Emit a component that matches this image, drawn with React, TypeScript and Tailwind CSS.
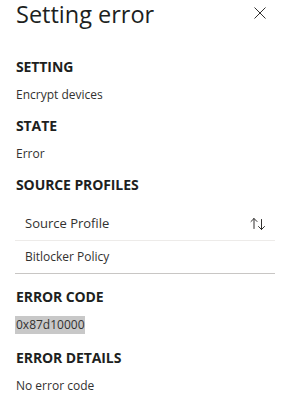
import React from "react";

const font = { fontFamily: '"Open Sans", "Noto Sans", sans-serif' };

function Heading({ children, className = "" }: { children: React.ReactNode; className?: string }) {
  return (
    <div className={"text-[14px] leading-[20px] font-bold text-[#201f1e] tracking-[-0.1px] " + className}>
      {children}
    </div>
  );
}

function Value({ children, className = "" }: { children: React.ReactNode; className?: string }) {
  return <div className={"text-[12px] leading-[20px] text-[#323130] " + className}>{children}</div>;
}

function SortIcon() {
  return (
    <svg width="16" height="14" viewBox="0 0 16 14" fill="none" stroke="#323130" strokeWidth="1" strokeLinecap="round" strokeLinejoin="round">
      <path d="M4 1.5V11.5M1 4.5L4 1.5L7 4.5" />
      <path d="M11.5 2.5V12.5M8.5 9.5L11.5 12.5L14.5 9.5" />
    </svg>
  );
}

export default function App() {
  return (
    <div className="w-[290px] h-[402px] bg-white overflow-hidden" style={font}>
      <div className="flex items-start justify-between pl-4 pr-[24px]">
        <h1 className="text-[23.5px] leading-[28px] font-normal text-[#201f1e]">Setting error</h1>
        <button className="mt-[7px] w-[12px] h-[12px] flex items-center justify-center" aria-label="Close">
          <svg width="12" height="12" viewBox="0 0 12 12" stroke="#323130" strokeWidth="1">
            <path d="M0.5 0.5L11.5 11.5M11.5 0.5L0.5 11.5" />
          </svg>
        </button>
      </div>

      <div className="flex flex-col pl-4 pt-[29px]">
        <Heading>SETTING</Heading>
        <Value className="mt-2">Encrypt devices</Value>

        <Heading className="mt-[11px]">STATE</Heading>
        <Value className="mt-2">Error</Value>

        <Heading className="mt-[11px]">SOURCE PROFILES</Heading>
      </div>

      <div className="mt-[13px] ml-[15px] mr-[15px] flex flex-col">
        <div className="h-[33px] flex items-center justify-between pl-[10px] pr-[9px] border-b border-[#edebe9]">
          <span className="text-[13px] text-[#323130] font-medium">Source Profile</span>
          <SortIcon />
        </div>
        <div className="h-[33px] flex items-center pl-[10px] border-b border-[#c8c6c4]">
          <span className="text-[12px] text-[#323130]">Bitlocker Policy</span>
        </div>
      </div>

      <div className="flex flex-col pl-4 pt-[13px]">
        <Heading>ERROR CODE</Heading>
        <div className="mt-2 h-[20px] flex items-center">
          <span className="text-[12px] leading-[18px] text-[#323130] bg-[#c8c8c8] -ml-px pl-px">0x87d10000</span>
        </div>

        <Heading className="mt-[13px]">ERROR DETAILS</Heading>
        <Value className="mt-2">No error code</Value>
      </div>
    </div>
  );
}
